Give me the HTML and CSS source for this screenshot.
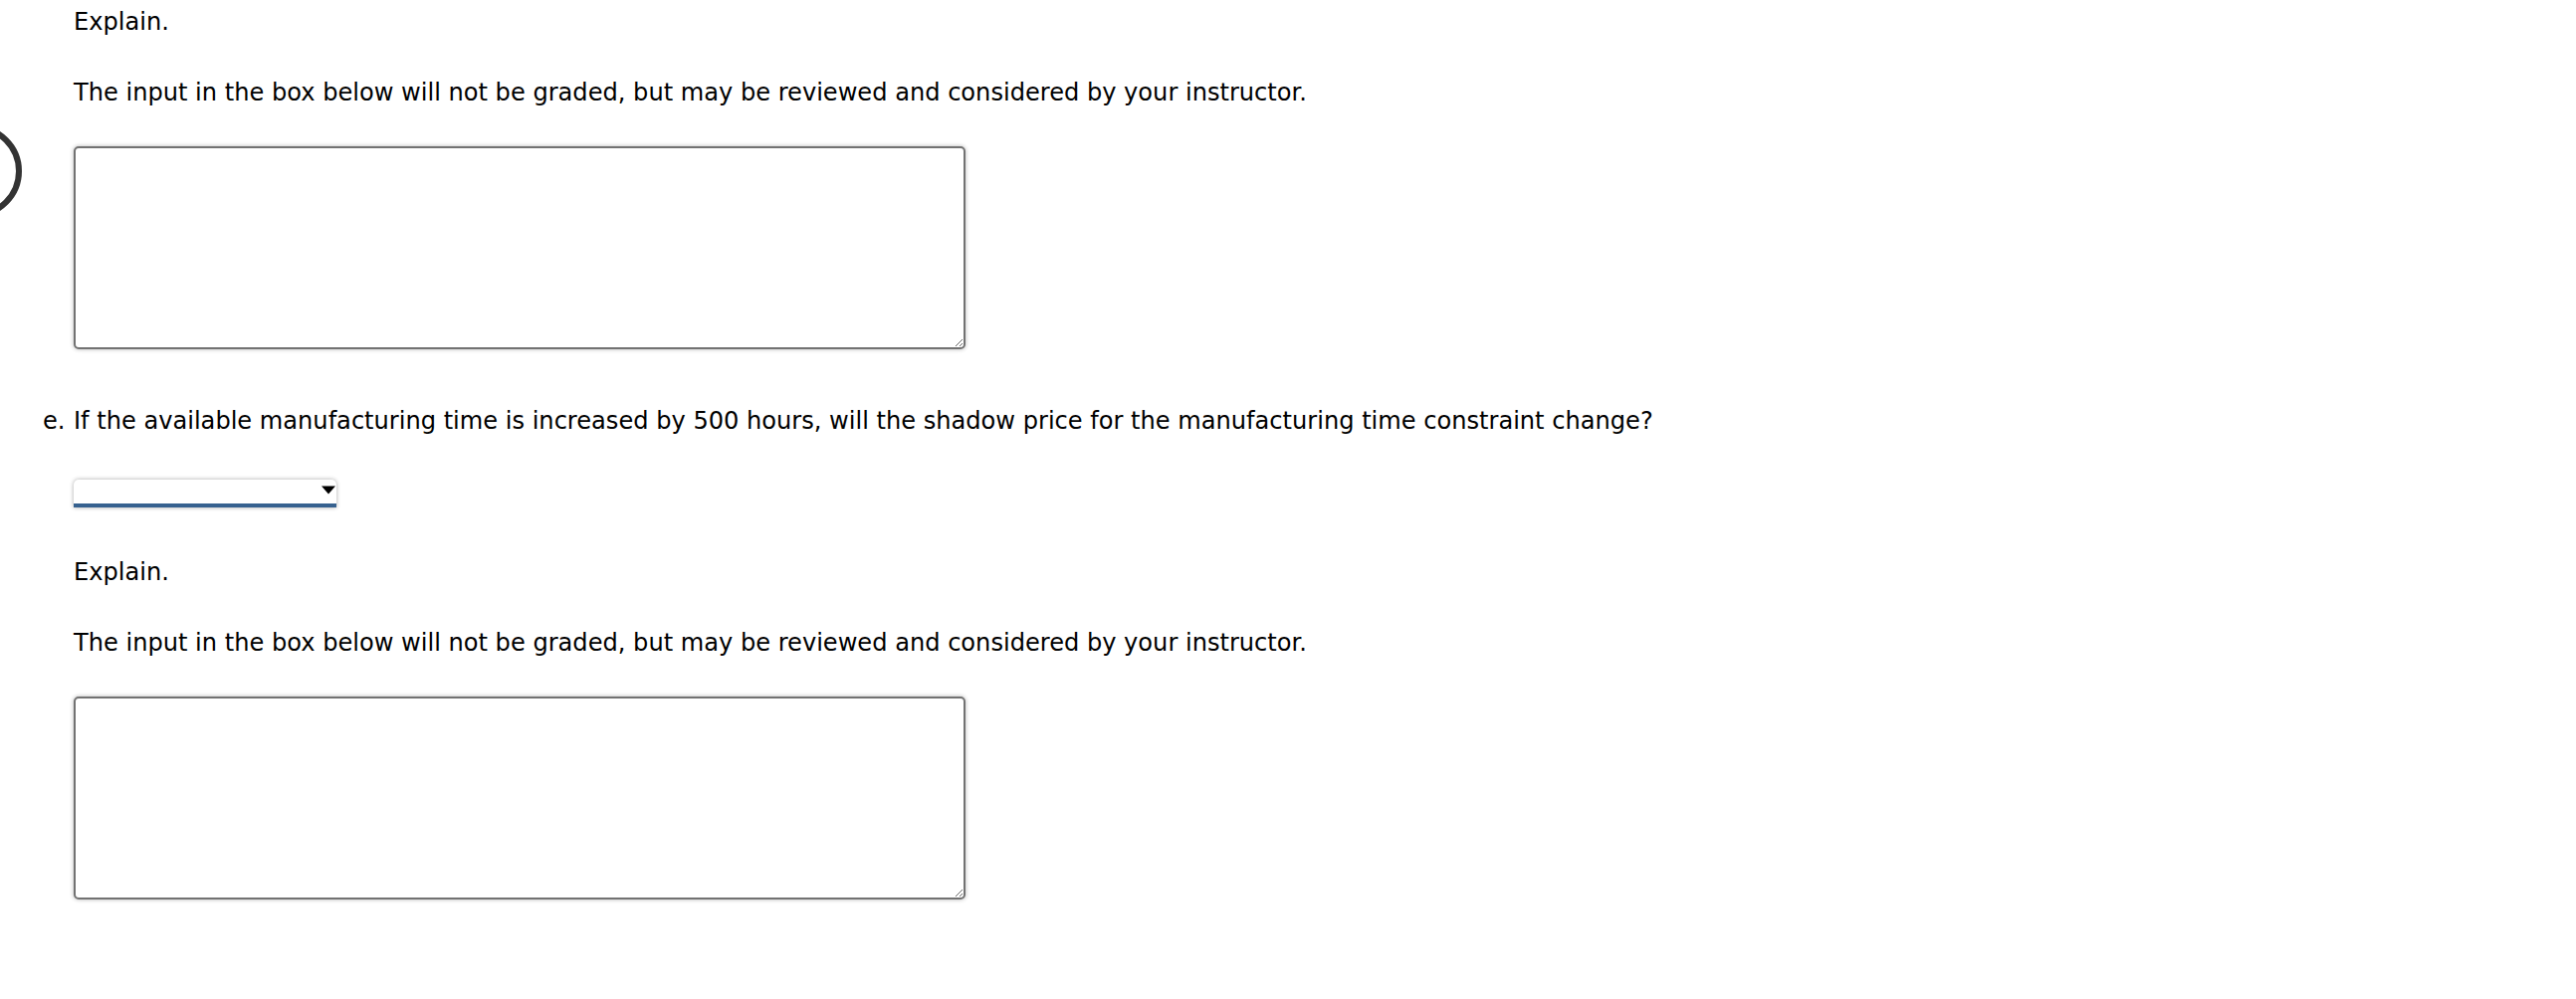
FILE: index.html
```html
<!DOCTYPE html>
<html lang="en">
<head>
<meta charset="utf-8">
<title>Question</title>
<link rel="stylesheet" href="styles.css">
</head>
<body>
<div class="ring"></div>
<main class="content">
  <section class="part">
    <p class="line explain">Explain.</p>
    <p class="line note">The input in the box below will not be graded, but may be reviewed and considered by your instructor.</p>
    <textarea class="answer" aria-label="Explanation"></textarea>
  </section>

  <section class="part">
    <p class="line question"><span class="label">e.</span>If the available manufacturing time is increased by 500 hours, will the shadow price for the manufacturing time constraint change?</p>
    <div class="dropdown">
      <select class="choice" aria-label="Answer">
        <option></option>
        <option>Yes</option>
        <option>No</option>
      </select>
      <svg class="arrow" width="14" height="9" viewBox="0 0 14 9" aria-hidden="true"><path d="M0 0.5 H14 L7 8.5 Z" fill="#000"/></svg>
    </div>
    <p class="line explain explain-2">Explain.</p>
    <p class="line note">The input in the box below will not be graded, but may be reviewed and considered by your instructor.</p>
    <textarea class="answer" aria-label="Explanation"></textarea>
  </section>
</main>
</body>
</html>
```

FILE: styles.css
```css
html, body {
  margin: 0;
  padding: 0;
  background: #fff;
}

body {
  font-family: "DejaVu Sans", Verdana, sans-serif;
  font-size: 24.1px;
  color: #000;
  position: relative;
  overflow: hidden;
  height: 1004px;
}

.ring {
  position: absolute;
  left: -72px;
  top: 125px;
  width: 82px;
  height: 82px;
  border: 6px solid #333;
  border-radius: 50%;
}

.content {
  padding: 4px 0 0 74px;
  display: flex;
  flex-direction: column;
}

.part {
  display: flex;
  flex-direction: column;
  align-items: flex-start;
}

.line {
  margin: 0;
  line-height: 36px;
  white-space: nowrap;
}

.note {
  margin-top: 35px;
}

.answer {
  margin-top: 36px;
  box-sizing: border-box;
  width: 896px;
  height: 204px;
  border: 2px solid #727272;
  border-radius: 5px;
  box-shadow: 0 0 4px rgba(0, 0, 0, 0.3);
  background: #fff;
  font: inherit;
  padding: 4px 6px;
  display: block;
}

.question {
  margin-top: 54px;
  position: relative;
}

.label {
  position: absolute;
  left: -31px;
}

.dropdown {
  margin-top: 41px;
  position: relative;
  width: 264px;
  height: 28px;
}

.choice {
  appearance: none;
  -webkit-appearance: none;
  box-sizing: border-box;
  width: 264px;
  height: 28px;
  margin: 0;
  border: 0;
  border-bottom: 4px solid #36618f;
  border-radius: 5px 5px 0 0;
  background: #fff;
  box-shadow: 0 0 4px rgba(0, 0, 0, 0.35);
  font: inherit;
  font-size: 18px;
  display: block;
}

.arrow {
  position: absolute;
  right: 1px;
  top: 6px;
}

.explain-2 {
  margin-top: 47px;
}
```
